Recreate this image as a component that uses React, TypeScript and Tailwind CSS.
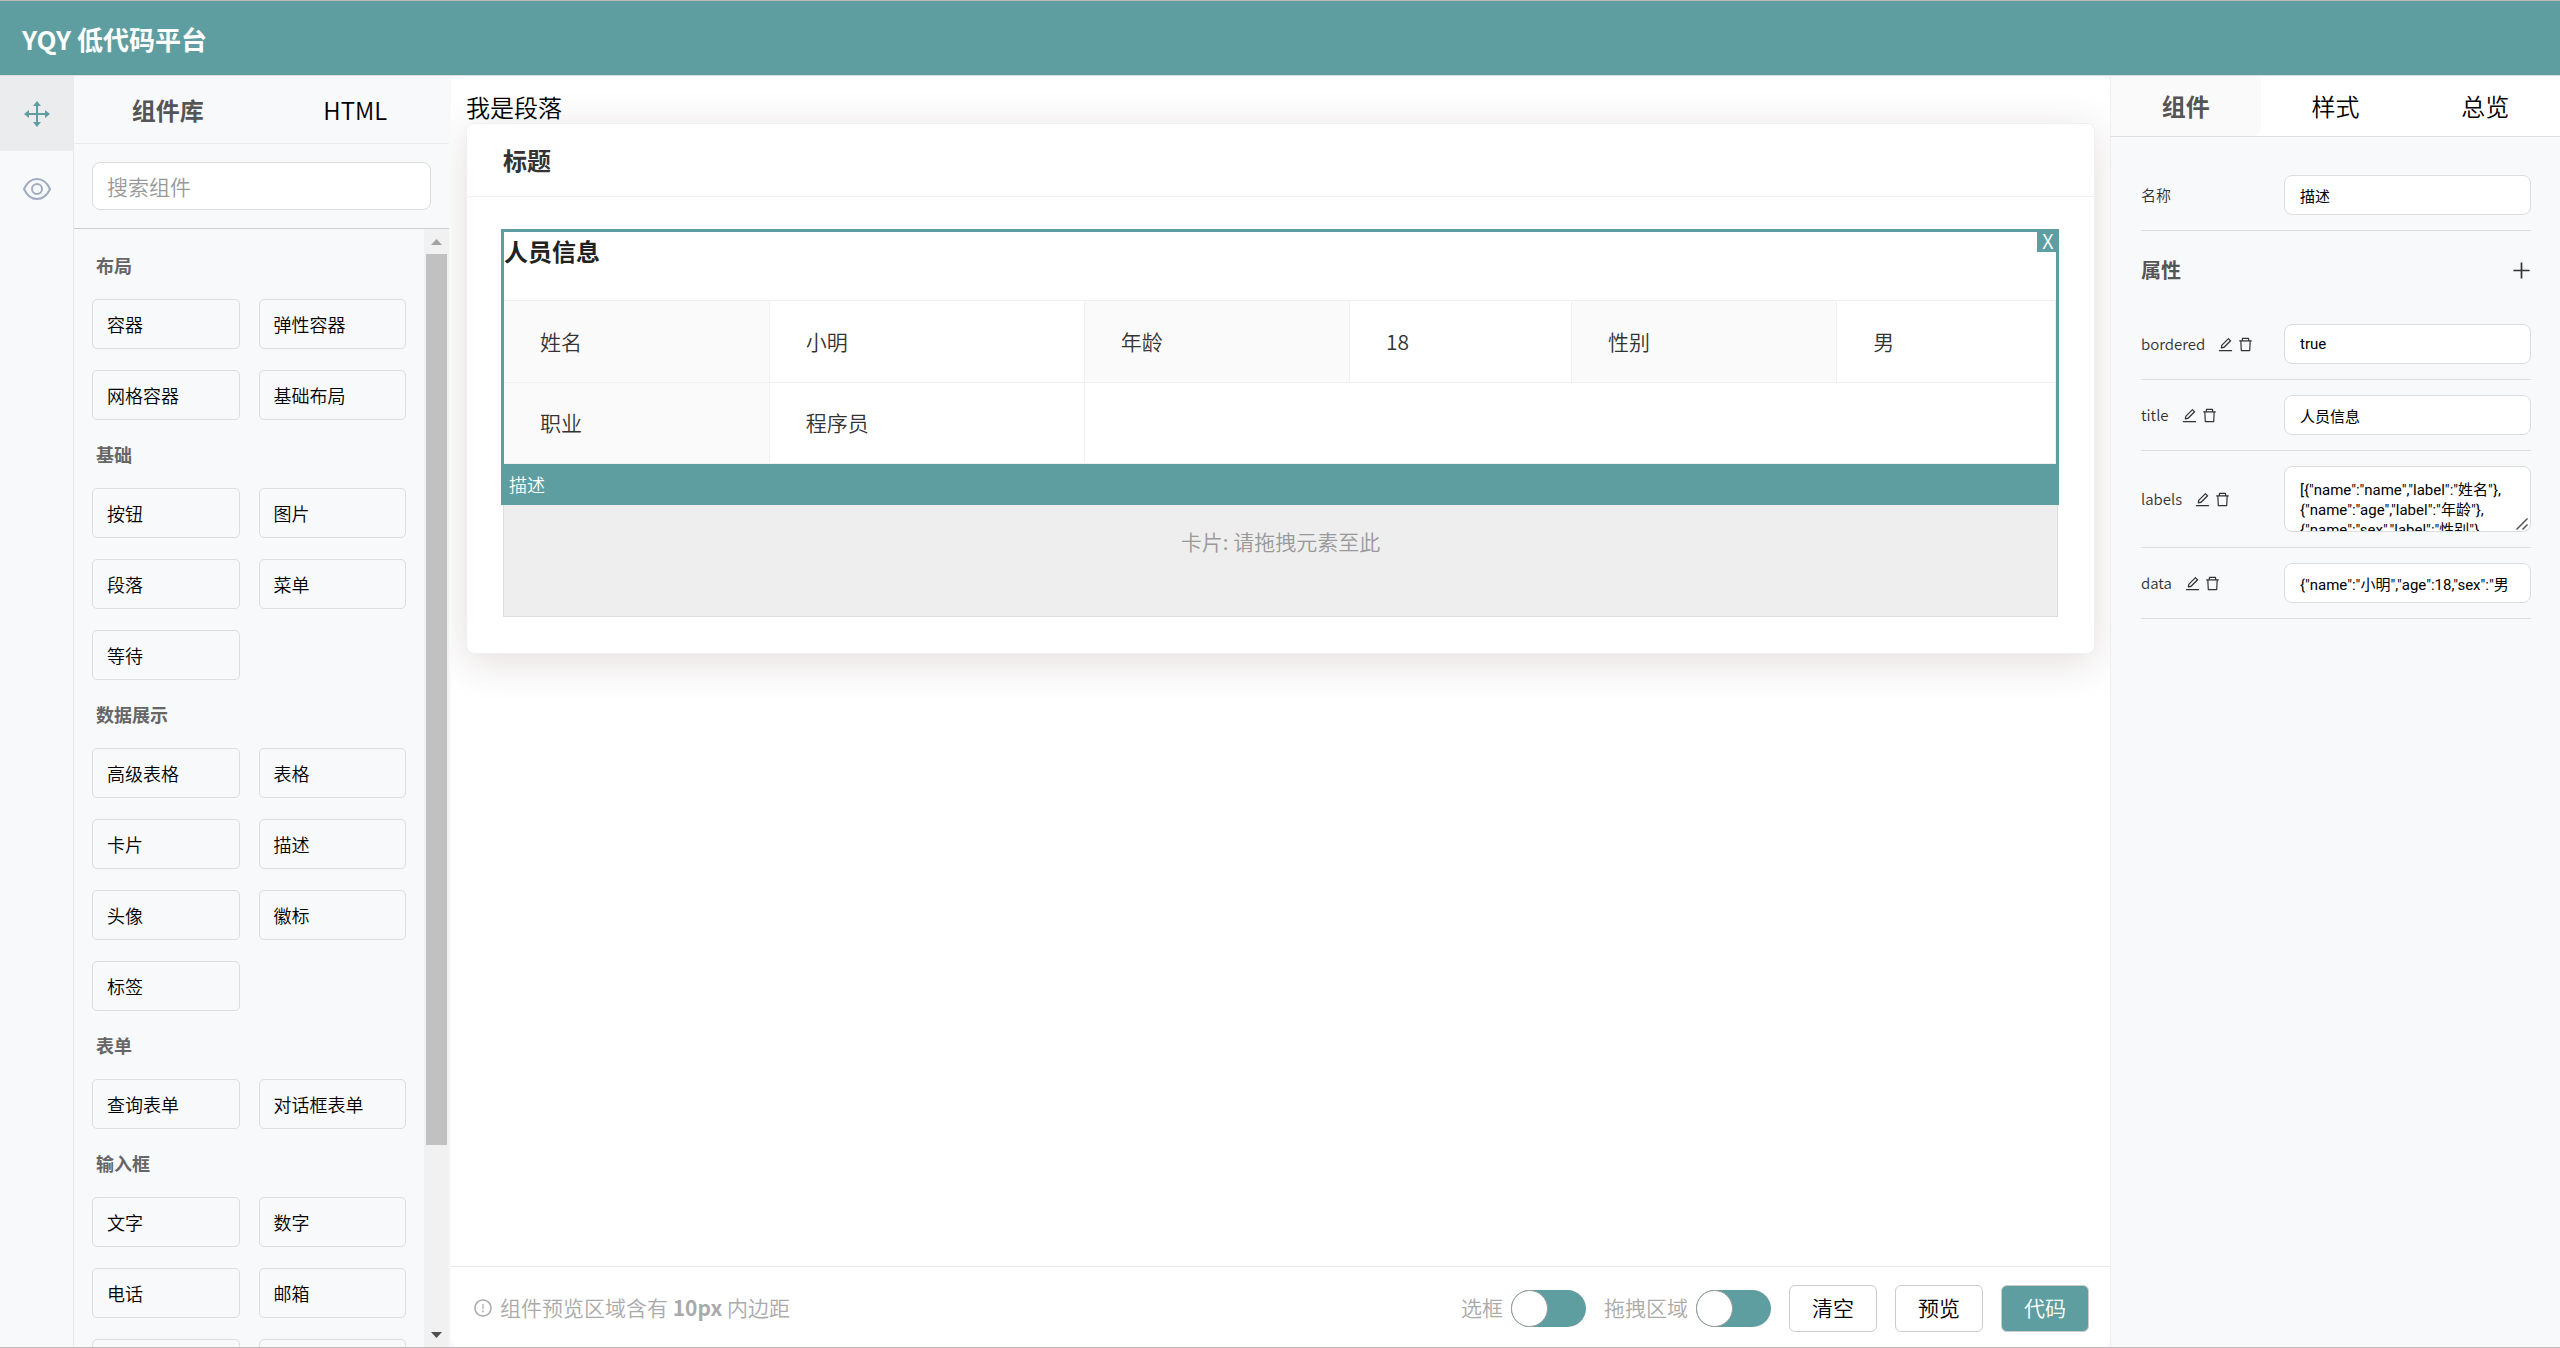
import { useState, type ReactNode } from 'react';
import { AiOutlineDelete, AiOutlineEdit, AiOutlineExclamationCircle, AiOutlinePlus } from 'react-icons/ai';

interface Group {
  title: string;
  items: string[];
}

interface Prop {
  name: string;
  value: string;
  multiline?: boolean;
}

const groups: Group[] = [
  { title: '布局', items: ['容器', '弹性容器', '网格容器', '基础布局'] },
  { title: '基础', items: ['按钮', '图片', '段落', '菜单', '等待'] },
  { title: '数据展示', items: ['高级表格', '表格', '卡片', '描述', '头像', '徽标', '标签'] },
  { title: '表单', items: ['查询表单', '对话框表单'] },
  { title: '输入框', items: ['文字', '数字', '电话', '邮箱', '', ''] },
];

const initialProps: Prop[] = [
  { name: 'bordered', value: 'true' },
  { name: 'title', value: '人员信息' },
  {
    name: 'labels',
    value: '[{"name":"name","label":"姓名"},\n{"name":"age","label":"年龄"},\n{"name":"sex","label":"性别"},',
    multiline: true,
  },
  { name: 'data', value: '{"name":"小明","age":18,"sex":"男' },
];

const fieldClass =
  "rounded-lg border border-[#dcdddf] bg-white px-[15px] font-['Roboto','Noto_Sans_CJK_SC',sans-serif] text-[15px] font-normal text-black focus:outline-none";

function MoveIcon() {
  return (
    <svg width="26" height="26" viewBox="0 0 26 26" fill="currentColor">
      <path d="M12 3h2v20h-2z" />
      <path d="M3 12h20v2H3z" />
      <path d="M13 0 17 5H9zM13 26 17 21H9zM0 13 5 9v8zM26 13 21 9v8z" />
    </svg>
  );
}

function EyeIcon() {
  return (
    <svg width="28" height="22" viewBox="0 0 28 22" fill="none" stroke="currentColor" strokeWidth="2">
      <path d="M1 11C4 4.500 8.500 1 14 1s10 3.500 13 10c-3 6.500-7.500 10-13 10S4 17.500 1 11z" />
      <circle cx="14" cy="11" r="5" />
    </svg>
  );
}

function Rail() {
  return (
    <nav className="flex w-[74px] shrink-0 flex-col border-r border-[#e8e9eb]">
      <button aria-label="拖拽" className="flex h-[75px] items-center justify-center bg-[#ebeced] text-[#5f9ea0]">
        <MoveIcon />
      </button>
      <button aria-label="预览" className="flex h-[75px] items-center justify-center text-[#a0abc0]">
        <EyeIcon />
      </button>
    </nav>
  );
}

function Library() {
  const [keyword, setKeyword] = useState('');

  return (
    <aside className="flex w-[377px] shrink-0 flex-col pr-0.5">
      <div className="flex h-[68px] shrink-0 border-b border-[#e8e9eb] text-2xl">
        <button className="flex-1 font-bold text-[#555]">组件库</button>
        <button className="flex-1 text-black">HTML</button>
      </div>
      <div className="shrink-0 border-b border-[#cdced1] p-[18px]">
        <input
          aria-label="搜索组件"
          placeholder="搜索组件"
          value={keyword}
          onChange={(e) => setKeyword(e.target.value)}
          className="block h-12 w-full rounded-lg border border-[#dcdddf] bg-white px-[14px] text-[21px] placeholder:text-[#999] focus:outline-none"
        />
      </div>
      <div className="flex min-h-0 flex-1">
        <div className="min-w-0 flex-1 overflow-hidden px-[18px] pt-0.5">
          {groups.map((group) => (
            <section key={group.title}>
              <h3 className="pl-1 text-lg leading-[68px] font-bold text-[#666]">{group.title}</h3>
              <div className="grid grid-cols-2 gap-x-[19px] gap-y-[21px]">
                {group.items.map((item, i) => (
                  <button
                    key={i}
                    className="h-[50px] rounded-[5px] border border-[#dcdddf] px-[14px] text-left text-lg text-black"
                  >
                    {item}
                  </button>
                ))}
              </div>
            </section>
          ))}
        </div>
        <Scrollbar />
      </div>
    </aside>
  );
}

function Scrollbar() {
  return (
    <div className="flex w-[25px] shrink-0 flex-col items-center bg-[#f1f1f1]">
      <div className="flex h-[25px] items-center">
        <svg width="11" height="6" viewBox="0 0 11 6" fill="#a3a3a3">
          <path d="M0 6 5.500 0 11 6z" />
        </svg>
      </div>
      <div className="w-[21px] flex-[890] bg-[#c1c1c1]" />
      <div className="flex-[177]" />
      <div className="flex h-[25px] items-center">
        <svg width="11" height="6" viewBox="0 0 11 6" fill="#505050">
          <path d="M0 0 5.500 6 11 0z" />
        </svg>
      </div>
    </div>
  );
}

function Th({ children }: { children: ReactNode }) {
  return (
    <th scope="row" className="border border-l-0 border-[#f0f0f0] bg-[#fafafa] px-9 text-left font-[350]">
      {children}
    </th>
  );
}

function Td({ children, colSpan }: { children?: ReactNode; colSpan?: number }) {
  return (
    <td colSpan={colSpan} className="border border-[#f0f0f0] px-9">
      {children}
    </td>
  );
}

function Descriptions() {
  return (
    <div className="relative -mr-px -ml-0.5 border-[3px] border-b-0 border-[#5f9ea0]">
      <h2 className="h-[68px] text-2xl leading-[38px] font-bold text-[#222]">人员信息</h2>
      <table className="w-full table-fixed border-collapse text-[21px] text-[#333]">
        <colgroup>
          <col className="w-[17.1%]" />
          <col className="w-[20.3%]" />
          <col className="w-[17.1%]" />
          <col className="w-[14.3%]" />
          <col className="w-[17.1%]" />
          <col />
        </colgroup>
        <tbody>
          <tr className="h-[82px]">
            <Th>姓名</Th>
            <Td>小明</Td>
            <Th>年龄</Th>
            <Td>18</Td>
            <Th>性别</Th>
            <Td>男</Td>
          </tr>
          <tr className="h-[81px]">
            <Th>职业</Th>
            <Td>程序员</Td>
            <Td colSpan={4} />
          </tr>
        </tbody>
      </table>
      <button
        aria-label="删除"
        className="absolute -top-[3px] -right-[3px] h-[23px] w-[22px] bg-[#5f9ea0] text-xl leading-5 text-white"
      >
        X
      </button>
    </div>
  );
}

function Preview() {
  return (
    <div className="min-h-0 flex-1 overflow-hidden p-[15px]">
      <p className="text-2xl leading-8 text-black">我是段落</p>
      <div className="rounded-lg border border-[#f0f0f0] bg-white shadow-[0_8px_40px_rgba(80,40,40,0.16)]">
        <div className="border-b border-[#f0f0f0] px-9 text-2xl leading-[72px] font-bold text-[#333]">标题</div>
        <div className="px-9 pt-8 pb-9">
          <Descriptions />
          <div className="-mr-px -ml-0.5 bg-[#5f9ea0] px-2 text-lg leading-[41px] text-white">描述</div>
          <div className="h-28 border border-t-0 border-[#ddd] bg-[#eee] pt-5 text-center text-[21px] leading-8 text-[#999]">
            卡片: 请拖拽元素至此
          </div>
        </div>
      </div>
    </div>
  );
}

function Toggle({ label }: { label: string }) {
  const [on, setOn] = useState(false);

  return (
    <label className="flex items-center gap-2 text-[21px] text-[#aaa]">
      {label}
      <input type="checkbox" checked={on} onChange={() => setOn(!on)} className="peer sr-only" />
      <span className="flex h-[37px] w-[75px] rounded-full bg-[#5f9ea0] peer-checked:justify-end">
        <span className="size-[37px] rounded-full border border-[#999] bg-white" />
      </span>
    </label>
  );
}

function Footer() {
  return (
    <footer className="flex h-[81px] shrink-0 items-center gap-[18px] border-t border-[#e8e8e8] pt-0.5 pr-[21px] pl-[22px]">
      <p className="flex flex-1 items-center gap-[7px] text-[21px] text-[#aaa]">
        <AiOutlineExclamationCircle size={20} />
        <span>
          组件预览区域含有 <b className="font-bold">10px</b> 内边距
        </span>
      </p>
      <Toggle label="选框" />
      <Toggle label="拖拽区域" />
      <button className="h-[47px] w-[88px] rounded-md border border-[#ccc] bg-white text-[21px] text-black">清空</button>
      <button className="h-[47px] w-[88px] rounded-md border border-[#ccc] bg-white text-[21px] text-black">预览</button>
      <button className="h-[47px] w-[88px] rounded-md border border-[#ccc] bg-[#5f9ea0] text-[21px] text-white">
        代码
      </button>
    </footer>
  );
}

function Inspector() {
  const [name, setName] = useState('描述');
  const [props, setProps] = useState(initialProps);

  const update = (key: string, value: string) =>
    setProps(props.map((p) => (p.name === key ? { ...p, value } : p)));

  return (
    <aside className="w-[450px] shrink-0 border-l border-[#eceef0]">
      <div className="flex h-[61px] border-b border-[#dcdddf] bg-white text-2xl">
        <button className="flex-1 rounded-br-lg bg-[#fafafa] font-bold text-[#555]">组件</button>
        <button className="flex-1 text-black">样式</button>
        <button className="flex-1 text-black">总览</button>
      </div>
      <div className="pt-[23px] pr-[29px] pl-[30px] text-[15px] text-[#333]">
        <div className="flex items-center justify-between border-b border-[#dcdddf] py-[15px]">
          <label htmlFor="name">名称</label>
          <input
            id="name"
            value={name}
            onChange={(e) => setName(e.target.value)}
            className={`${fieldClass} h-10 w-[247px]`}
          />
        </div>
        <div className="flex h-[78px] items-center justify-between">
          <h3 className="text-xl font-bold text-[#555]">属性</h3>
          <button aria-label="添加属性" className="-mr-0.5">
            <AiOutlinePlus size={23} />
          </button>
        </div>
        {props.map((prop) => (
          <div key={prop.name} className="flex items-center justify-between border-b border-[#dcdddf] py-[15px]">
            <div className="flex items-center">
              <label htmlFor={prop.name}>{prop.name}</label>
              <button aria-label={`编辑 ${prop.name}`} className="ml-3">
                <AiOutlineEdit size={17} />
              </button>
              <button aria-label={`删除 ${prop.name}`} className="ml-[3px]">
                <AiOutlineDelete size={17} />
              </button>
            </div>
            {prop.multiline ? (
              <div className="relative w-[247px]">
                <textarea
                  id={prop.name}
                  value={prop.value}
                  onChange={(e) => update(prop.name, e.target.value)}
                  className={`${fieldClass} block h-[66px] w-full resize-none overflow-hidden pt-[13px] leading-5 whitespace-pre`}
                />
                <svg
                  className="absolute right-[3px] bottom-0.5"
                  width="12"
                  height="12"
                  viewBox="0 0 12 12"
                  fill="none"
                  stroke="#555"
                  strokeWidth="1.500"
                >
                  <path d="M.5 11.500 11.500.5M6.500 11.500l5-5" />
                </svg>
              </div>
            ) : (
              <input
                id={prop.name}
                value={prop.value}
                onChange={(e) => update(prop.name, e.target.value)}
                className={`${fieldClass} h-10 w-[247px]`}
              />
            )}
          </div>
        ))}
      </div>
    </aside>
  );
}

export default function App() {
  return (
    <div className="flex h-screen flex-col overflow-hidden border-t border-b border-[#c0b8b8] bg-[#f8f9fb] font-['Noto_Sans_CJK_SC',sans-serif] font-[350]">
      <header className="flex h-[75px] shrink-0 items-center border-b border-[#dcdddf] bg-[#5f9ea0] px-[22px]">
        <h1 className="text-[26px] font-bold text-white">YQY 低代码平台</h1>
      </header>
      <div className="flex min-h-0 flex-1">
        <Rail />
        <Library />
        <main className="flex min-w-0 flex-1 flex-col overflow-hidden rounded-lg bg-white">
          <Preview />
          <Footer />
        </main>
        <Inspector />
      </div>
    </div>
  );
}
